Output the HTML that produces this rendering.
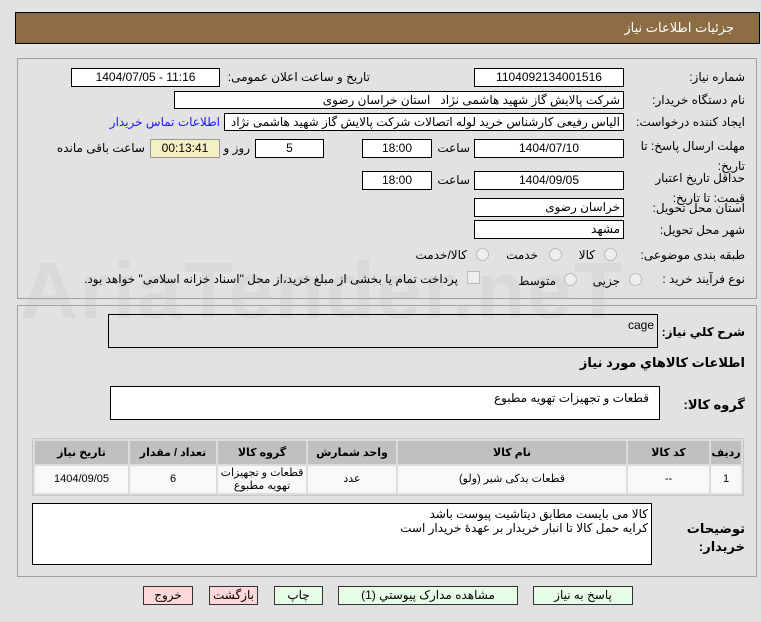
<!DOCTYPE html>
<html><head><meta charset="utf-8"><style>
body{margin:0;width:761px;height:622px;background:#e2e2e2;font-family:"Liberation Sans","DejaVu Sans",sans-serif;font-size:12px;color:#000;position:relative;overflow:hidden}
.a{position:absolute;white-space:nowrap}
.box{position:absolute;background:#fff;border:1px solid #000;box-sizing:border-box;text-align:center;line-height:16px;font-size:12px;overflow:hidden;white-space:nowrap}
.lbl{position:absolute;white-space:nowrap;direction:rtl;text-align:right;font-size:12px}
.panel{position:absolute;border:1px solid #a0a0a0;box-sizing:border-box}
.radio{position:absolute;width:11px;height:11px;border-radius:50%;border:1px solid #bbb;background:#eee}
.btn{position:absolute;border:1px solid #333;box-sizing:border-box;text-align:center;line-height:16px;font-size:12px;direction:rtl}
table{position:absolute;border-collapse:separate;border-spacing:2px;background:#dcdcdc;border:1px solid #c8c8c8;table-layout:fixed}
td,th{text-align:center;font-size:11px;direction:rtl;padding:0}
th{background:#c0c0c0;height:23px}
td{background:#f8f8f8;height:27px;line-height:13px}
</style></head><body>
<div class="a" style="left:15px;top:12px;width:745px;height:32px;background:#8b6c43;border:1px solid #000;box-sizing:border-box"></div>
<div class="lbl" style="right:27px;top:20px;color:#fff;font-size:13px">جزئیات اطلاعات نیاز</div>

<div class="panel" style="left:17px;top:58px;width:740px;height:241px"></div>
<div class="panel" style="left:17px;top:305px;width:740px;height:272px"></div>

<div class="a" style="left:20px;top:245px;font-size:80px;font-weight:bold;color:rgba(185,185,185,0.2);letter-spacing:2px">AriaTender.neT</div>

<div class="lbl" style="right:16px;top:70px">شماره نیاز:</div>
<div class="box" style="left:474px;top:68px;width:150px;height:19px">1104092134001516</div>
<div class="lbl" style="right:391px;top:70px">تاریخ و ساعت اعلان عمومی:</div>
<div class="box" style="left:71px;top:68px;width:149px;height:19px">1404/07/05 - 11:16</div>

<div class="lbl" style="right:16px;top:93px">نام دستگاه خریدار:</div>
<div class="box" style="left:174px;top:91px;width:450px;height:18px;text-align:right;padding-right:3px;direction:rtl">شرکت پالایش گاز شهید هاشمی نژاد &nbsp; استان خراسان رضوی</div>

<div class="lbl" style="right:16px;top:115px">ایجاد کننده درخواست:</div>
<div class="box" style="left:224px;top:113px;width:400px;height:18px;text-align:right;padding-right:3px;direction:rtl">الیاس رفیعی کارشناس خرید لوله اتصالات شرکت پالایش گاز شهید هاشمی نژاد</div>
<div class="lbl" style="right:541px;top:115px;color:#1a1aff">اطلاعات تماس خریدار</div>

<div class="lbl" style="right:16px;top:136px;line-height:20px">مهلت ارسال پاسخ: تا<br>تاریخ:</div>
<div class="box" style="left:474px;top:139px;width:150px;height:19px">1404/07/10</div>
<div class="lbl" style="right:291px;top:141px">ساعت</div>
<div class="box" style="left:362px;top:139px;width:70px;height:19px">18:00</div>
<div class="box" style="left:255px;top:139px;width:69px;height:19px">5</div>
<div class="lbl" style="right:511px;top:141px">روز و</div>
<div class="box" style="left:150px;top:139px;width:70px;height:19px;background:#f4f0c4;border-color:#999">00:13:41</div>
<div class="lbl" style="right:616px;top:141px">ساعت باقی مانده</div>

<div class="lbl" style="right:16px;top:168px;line-height:20px">حداقل تاریخ اعتبار<br>قیمت: تا تاریخ:</div>
<div class="box" style="left:474px;top:171px;width:150px;height:19px">1404/09/05</div>
<div class="lbl" style="right:291px;top:173px">ساعت</div>
<div class="box" style="left:362px;top:171px;width:70px;height:19px">18:00</div>

<div class="lbl" style="right:16px;top:201px">استان محل تحویل:</div>
<div class="box" style="left:474px;top:198px;width:150px;height:19px;text-align:right;padding-right:3px;direction:rtl">خراسان رضوی</div>
<div class="lbl" style="right:16px;top:223px">شهر محل تحویل:</div>
<div class="box" style="left:474px;top:220px;width:150px;height:19px;text-align:right;padding-right:3px;direction:rtl">مشهد</div>

<div class="lbl" style="right:16px;top:248px">طبقه بندی موضوعی:</div>
<div class="radio" style="left:604px;top:248px"></div><div class="lbl" style="right:166px;top:248px">کالا</div>
<div class="radio" style="left:549px;top:248px"></div><div class="lbl" style="right:223px;top:248px">خدمت</div>
<div class="radio" style="left:476px;top:248px"></div><div class="lbl" style="right:294px;top:248px">کالا/خدمت</div>

<div class="lbl" style="right:16px;top:272px">نوع فرآیند خرید :</div>
<div class="radio" style="left:629px;top:273px"></div><div class="lbl" style="right:141px;top:274px">جزیی</div>
<div class="radio" style="left:564px;top:273px"></div><div class="lbl" style="right:205px;top:274px">متوسط</div>
<div class="a" style="left:467px;top:271px;width:11px;height:11px;border:1px solid #bbb;background:#eee"></div>
<div class="lbl" style="right:303px;top:272px">پرداخت تمام یا بخشی از مبلغ خرید،از محل "اسناد خزانه اسلامی" خواهد بود.</div>

<div class="lbl" style="right:16px;top:325px;font-weight:bold;font-size:12px">شرح کلي نياز:</div>
<div class="box" style="left:108px;top:314px;width:550px;height:34px;background:transparent;text-align:right;padding-right:3px;line-height:20px">cage</div>
<div class="lbl" style="right:16px;top:355px;font-weight:bold;font-size:13px">اطلاعات کالاهاي مورد نياز</div>
<div class="lbl" style="right:16px;top:397px;font-weight:bold;font-size:13px">گروه کالا:</div>
<div class="box" style="left:110px;top:386px;width:550px;height:34px;text-align:right;padding-right:10px;direction:rtl;line-height:22px">قطعات و تجهیزات تهویه مطبوع</div>

<table style="left:32px;top:438px;width:712px">
<colgroup><col style="width:93px"><col style="width:86px"><col style="width:88px"><col style="width:88px"><col><col style="width:81px"><col style="width:30px"></colgroup>
<tr><th>تاریخ نیاز</th><th>تعداد / مقدار</th><th>گروه کالا</th><th>واحد شمارش</th><th>نام کالا</th><th>کد کالا</th><th>ردیف</th></tr>
<tr><td>1404/09/05</td><td>6</td><td>قطعات و تجهیزات<br>تهویه مطبوع</td><td>عدد</td><td>قطعات یدکی شیر (ولو)</td><td>--</td><td>1</td></tr>
</table>

<div class="lbl" style="right:16px;top:520px;font-weight:bold;font-size:13px;line-height:18px">توضیحات<br>خریدار:</div>
<div class="box" style="left:32px;top:503px;width:620px;height:62px;text-align:right;padding-right:3px;direction:rtl;line-height:14px;padding-top:3px;white-space:normal">کالا می بایست مطابق دیتاشیت پیوست باشد<br>کرایه حمل کالا تا انبار خریدار بر عهدهٔ خریدار است</div>

<div class="btn" style="left:143px;top:586px;width:50px;height:19px;background:#fcd8d8">خروج</div>
<div class="btn" style="left:209px;top:586px;width:49px;height:19px;background:#fcd8d8">بازگشت</div>
<div class="btn" style="left:274px;top:586px;width:49px;height:19px;background:#e6fce6">چاپ</div>
<div class="btn" style="left:338px;top:586px;width:180px;height:19px;background:#e6fce6">مشاهده مدارک پیوستي (1)</div>
<div class="btn" style="left:533px;top:586px;width:100px;height:19px;background:#e6fce6">پاسخ به نیاز</div>
</body></html>
